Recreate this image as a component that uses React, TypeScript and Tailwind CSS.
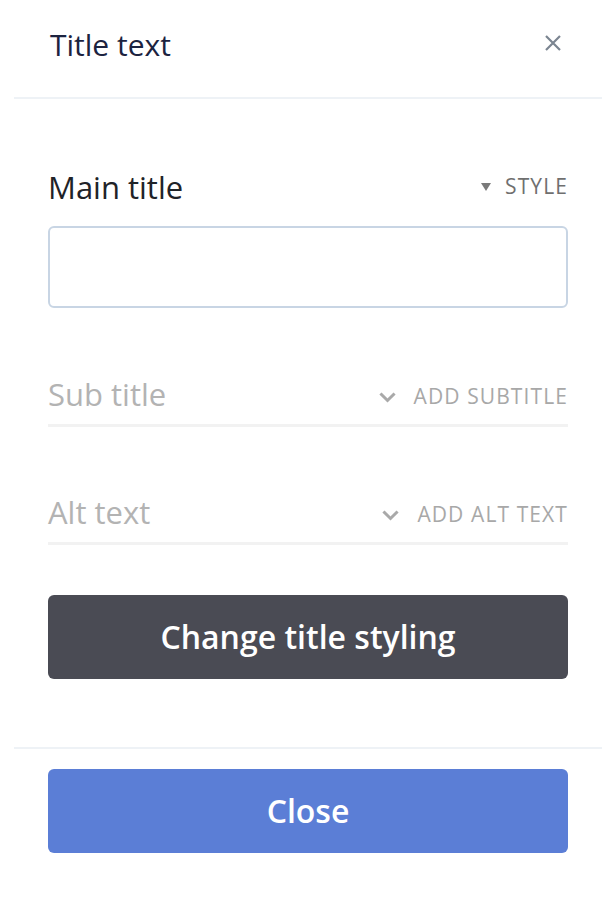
import React from 'react';

const font = { fontFamily: '"Open Sans", Lato, sans-serif' };

const Chevron = () => (
  <svg width="17" height="11" viewBox="0 0 17 11" fill="none" className="mr-[18px]">
    <path d="M2.5 2.5l6 6 6-6" stroke="#a9a9a9" strokeWidth="3" strokeLinecap="square" />
  </svg>
);

const OptionalField: React.FC<{ label: string; action: string }> = ({ label, action }) => (
  <div className="border-b-[3px] border-[#f2f2f2] pb-[12px] flex items-center justify-between">
    <span className="text-[31px] text-[#b3b3b3] leading-[36px]">{label}</span>
    <span className="flex items-center translate-y-[3px] text-[21px] text-[#a8a8a8] uppercase tracking-[1.1px]">
      <Chevron />
      {action}
    </span>
  </div>
);

export default function App() {
  return (
    <div className="w-[610px] h-[900px] bg-white overflow-hidden" style={font}>
      <div className="ml-[14px] w-[588px] h-[99px] border-b-2 border-[#eef2f6] flex items-start justify-between pl-[36px] pr-[40px] pt-[27px]">
        <h1 className="text-[30px] text-[#1c2340] leading-[36px]">Title text</h1>
        <button className="mt-[7px] text-[#7b8591]">
          <svg width="18" height="18" viewBox="0 0 18 18" fill="none">
            <path d="M2 2l14 14M16 2L2 16" stroke="currentColor" strokeWidth="2.2" />
          </svg>
        </button>
      </div>

      <div className="ml-[48px] w-[520px] pt-[70px]">
        <div className="flex items-center justify-between mb-[21px]">
          <span className="text-[31px] text-[#1f2328] leading-[36px]">Main title</span>
          <span className="flex items-center text-[21px] text-[#6f6f6f] uppercase tracking-[1.1px]">
            <svg width="10" height="8" viewBox="0 0 10 8" className="mr-[14px]">
              <path d="M0 0h10L5 8z" fill="#7a7a7a" />
            </svg>
            Style
          </span>
        </div>
        <input className="w-full h-[82px] rounded-[6px] border-2 border-[#c8d5e4] outline-none px-4 text-[24px]" />

        <div className="mt-[68px]">
          <OptionalField label="Sub title" action="Add subtitle" />
        </div>
        <div className="mt-[67px]">
          <OptionalField label="Alt text" action="Add alt text" />
        </div>

        <button className="mt-[50px] w-full h-[84px] rounded-[6px] bg-[#4a4b54] text-white text-[32px] font-semibold">
          Change title styling
        </button>
      </div>

      <div className="ml-[14px] w-[588px] mt-[68px] border-t-2 border-[#eef2f6]" />

      <div className="ml-[48px] w-[520px] pt-[20px]">
        <button className="w-full h-[84px] rounded-[6px] bg-[#5b7ed6] text-white text-[32px] font-semibold">
          Close
        </button>
      </div>
    </div>
  );
}
